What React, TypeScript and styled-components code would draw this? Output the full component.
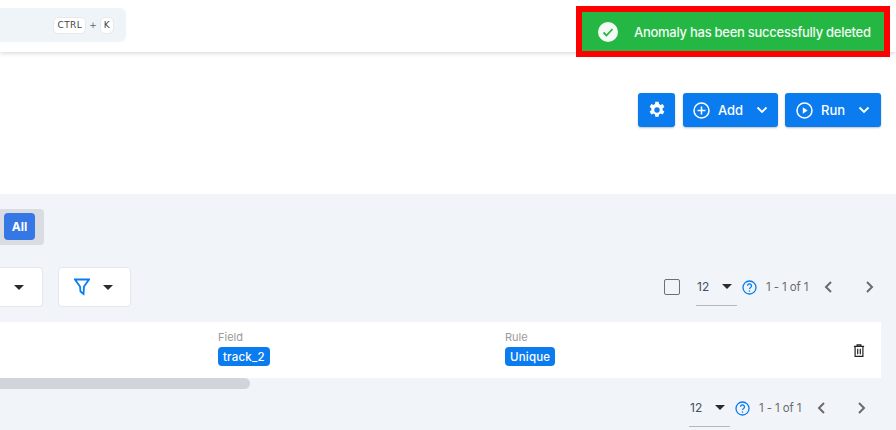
import React from "react";
import styled, { createGlobalStyle } from "styled-components";

const Global = createGlobalStyle`
  html, body { margin: 0; padding: 0; height: 430px; overflow: hidden; background: #fff; }
  body { font-family: "Inter", "Noto Sans", sans-serif; }
  * { box-sizing: border-box; }
`;

const Page = styled.div`
  position: relative;
  width: 896px;
  height: 430px;
  overflow: hidden;
  display: flex;
  flex-direction: column;
`;

const Header = styled.header`
  height: 52px;
  flex: none;
  padding-top: 8px;
  background: #fff;
  box-shadow: 0 1px 5px rgba(0, 0, 0, 0.18);
`;

const Search = styled.div`
  width: 126px;
  height: 34px;
  background: #eff4f9;
  border-radius: 0 6px 6px 0;
  display: flex;
  align-items: center;
  justify-content: flex-end;
  gap: 3px;
  padding-right: 12px;
  color: #666;
  font-family: "DejaVu Sans", sans-serif;
  font-size: 9px;
`;

const Key = styled.kbd`
  height: 17px;
  padding: 0 3px;
  display: flex;
  align-items: center;
  background: #fff;
  border: 1px solid #e6e8eb;
  border-radius: 5px;
  font-family: "DejaVu Sans", sans-serif;
  font-size: 9px;
  letter-spacing: 0.4px;
  color: #444;
`;

const Toast = styled.div`
  position: absolute;
  left: 576px;
  top: 6px;
  width: 314px;
  height: 51px;
  border: 6px solid #fe0000;
  background: #25b744;
  display: flex;
  align-items: center;
  padding: 0 13px 0 16px;
  gap: 16px;
  color: #f1fbf3;
  font-size: 13px;
  font-weight: 500;
  letter-spacing: -0.27px;
  white-space: nowrap;
`;

const Toolbar = styled.div`
  height: 142px;
  flex: none;
  padding: 41px 15px 0 0;
  display: flex;
  justify-content: flex-end;
  align-items: flex-start;
  gap: 7px;
`;

const ActionButton = styled.button<{ $w: number; $after?: number }>`
  width: ${(p) => p.$w}px;
  height: 34px;
  margin-right: ${(p) => p.$after ?? 0}px;
  padding: 0;
  border: 0;
  border-radius: 3px;
  background: #0a7cf0;
  color: #fff;
  box-shadow: 0 1px 2px rgba(0, 0, 0, 0.25);
  display: flex;
  align-items: center;
  justify-content: center;
  gap: 8px;
  font-family: inherit;
  font-size: 13px;
  font-weight: 500;
`;

const Label = styled.span`
  margin-right: 5px;
`;

const Section = styled.section`
  flex: 1;
  background: #f1f5fa;
  padding-top: 15px;
`;

const Tabs = styled.div`
  width: 44px;
  height: 36px;
  background: #d9dce1;
  border-radius: 0 4px 4px 0;
  padding: 4px 0 0 4px;
`;

const TabActive = styled.div`
  width: 31px;
  height: 27px;
  background: #3578e5;
  border-radius: 4px;
  color: #fff;
  font-size: 12px;
  font-weight: 700;
  display: flex;
  align-items: center;
  justify-content: center;
`;

const Controls = styled.div`
  margin-top: 22px;
  height: 40px;
  display: flex;
  align-items: center;
`;

const FilterBox = styled.div<{ $w: number; $open?: boolean }>`
  width: ${(p) => p.$w}px;
  height: 40px;
  background: #fff;
  border: 1px solid #e4e7eb;
  border-radius: ${(p) => (p.$open ? "0 4px 4px 0" : "4px")};
  ${(p) => (p.$open ? "border-left: 0;" : "")}
  display: flex;
  align-items: center;
  justify-content: ${(p) => (p.$open ? "flex-end" : "flex-start")};
  padding: ${(p) => (p.$open ? "0 18px 0 0" : "0 0 0 15px")};
  gap: 13px;
`;

const Gap = styled.div`
  width: 15px;
  flex: none;
`;

const Spacer = styled.div`
  flex: 1;
`;

const Caret = styled.span`
  width: 0;
  height: 0;
  flex: none;
  border-left: 5px solid transparent;
  border-right: 5px solid transparent;
  border-top: 5px solid #2b2b2b;
`;

const Pager = styled.div<{ $end: number }>`
  display: flex;
  align-items: center;
  height: 40px;
  padding-right: ${(p) => p.$end}px;
`;

const Check = styled.span`
  width: 16px;
  height: 16px;
  border: 1.5px solid #6f6f6f;
  border-radius: 2px;
  margin-right: 16px;
`;

const PageSize = styled.div`
  width: 41px;
  height: 38px;
  border-bottom: 1px solid #b5b9be;
  display: flex;
  align-items: center;
  justify-content: space-between;
  padding: 0 5px 0 1px;
  margin-right: 5px;
  font-size: 12px;
  color: #45505e;
`;

const PageText = styled.span`
  font-size: 11.5px;
  color: #6b6b6b;
  letter-spacing: -0.1px;
  margin-left: 9px;
  white-space: nowrap;
  width: 57px;
`;

const NavIcon = styled.svg<{ $gap: number }>`
  margin-right: ${(p) => p.$gap}px;
  flex: none;
`;

const Row = styled.div`
  margin-top: 15px;
  width: 881px;
  height: 56px;
  background: #fff;
  display: grid;
  grid-template-columns: 287px 1fr auto;
  align-items: start;
  padding: 9px 16px 0 218px;
`;

const Cell = styled.div`
  display: flex;
  flex-direction: column;
  align-items: flex-start;
  gap: 3px;
`;

const CellLabel = styled.span`
  font-size: 11px;
  line-height: 13px;
  color: #9a9a9a;
`;

const Badge = styled.span`
  height: 19px;
  padding: 0 5px;
  display: flex;
  align-items: center;
  background: #0a7cf0;
  border-radius: 4px;
  color: #fff;
  font-size: 11.5px;
  font-weight: 500;
  letter-spacing: 0.2px;
`;

const Trash = styled.svg`
  margin-top: 13px;
`;

const Scrollbar = styled.div`
  width: 250px;
  height: 11px;
  background: #d1d5db;
  border-radius: 0 6px 6px 0;
`;

const BottomPager = styled(Pager)`
  margin-top: -1px;
  justify-content: flex-end;
`;

const Chevron = ({ d, gap }: { d: string; gap: number }) => (
  <NavIcon $gap={gap} width="12" height="14" viewBox="0 0 12 14" fill="none" stroke="#6b6b6b" strokeWidth="2">
    <path d={d} />
  </NavIcon>
);

const Help = () => (
  <svg width="15" height="15" viewBox="0 0 15 15" fill="none" style={{ flex: "none" }}>
    <circle cx="7.5" cy="7.5" r="6.5" stroke="#0a7cf0" strokeWidth="1.3" />
    <path d="M5.5 5.8a2 2 0 1 1 3.1 1.7c-.7.4-1.1.8-1.1 1.6" stroke="#0a7cf0" strokeWidth="1.3" />
    <circle cx="7.5" cy="11" r=".8" fill="#0a7cf0" />
  </svg>
);

const Paging = () => (
  <>
    <PageSize>
      12
      <Caret />
    </PageSize>
    <Help />
    <PageText>1 - 1 of 1</PageText>
  </>
);

export default function App() {
  return (
    <Page>
      <Global />
      <Header>
        <Search>
          <Key>CTRL</Key>+<Key>K</Key>
        </Search>
      </Header>
      <Toast>
        <svg width="20" height="20" viewBox="0 0 20 20">
          <circle cx="10" cy="10" r="10" fill="#f4fbf5" />
          <path d="M5.5 10.5l3 3 6-6.5" fill="none" stroke="#25b744" strokeWidth="1.8" />
        </svg>
        Anomaly has been successfully deleted
      </Toast>
      <Toolbar>
        <ActionButton $w={37} $after={1} aria-label="Settings">
          <svg width="18" height="18" viewBox="0 0 24 24" fill="#fff">
            <path fillRule="evenodd" d="M14.2 1l.5 3a8.5 8.5 0 0 1 2.1 1.2l2.8-1.1 2.2 3.8-2.3 1.9a8.6 8.6 0 0 1 0 2.4l2.3 1.9-2.2 3.8-2.8-1.1a8.5 8.5 0 0 1-2.1 1.2l-.5 3H9.8l-.5-3a8.5 8.5 0 0 1-2.1-1.2l-2.8 1.1-2.2-3.8 2.3-1.9a8.6 8.6 0 0 1 0-2.4L2.2 7.9l2.2-3.8 2.8 1.1A8.5 8.5 0 0 1 9.3 4l.5-3zM12 8.4a3.6 3.6 0 1 0 0 7.2 3.6 3.6 0 0 0 0-7.2z" />
          </svg>
        </ActionButton>
        <ActionButton $w={95}>
          <svg width="17" height="17" viewBox="0 0 17 17" fill="none" stroke="#fff" strokeWidth="1.5">
            <circle cx="8.5" cy="8.5" r="7.5" />
            <path d="M8.5 4.5v8M4.5 8.5h8" />
          </svg>
          <Label>Add</Label>
          <svg width="12" height="8" viewBox="0 0 12 8" fill="none" stroke="#fff" strokeWidth="1.8">
            <path d="M1.5 1.5L6 6l4.5-4.5" />
          </svg>
        </ActionButton>
        <ActionButton $w={96}>
          <svg width="17" height="17" viewBox="0 0 17 17" fill="none" stroke="#fff" strokeWidth="1.5">
            <circle cx="8.5" cy="8.5" r="7.5" />
            <path d="M6.8 5.2l4.8 3.3-4.8 3.3z" fill="#fff" stroke="none" />
          </svg>
          <Label>Run</Label>
          <svg width="12" height="8" viewBox="0 0 12 8" fill="none" stroke="#fff" strokeWidth="1.8">
            <path d="M1.5 1.5L6 6l4.5-4.5" />
          </svg>
        </ActionButton>
      </Toolbar>
      <Section>
        <Tabs>
          <TabActive>All</TabActive>
        </Tabs>
        <Controls>
          <FilterBox $w={43} $open>
            <Caret />
          </FilterBox>
          <Gap />
          <FilterBox $w={73}>
            <svg width="16" height="18" viewBox="0 0 16 18" fill="none" stroke="#0a7cf0" strokeWidth="1.8">
              <path d="M1 1.5h14L10 8.5 9.5 16 6.5 13.5 6 8.5z" />
            </svg>
            <Caret />
          </FilterBox>
          <Spacer />
          <Pager $end={21}>
            <Check />
            <Paging />
            <Chevron d="M8 2L3 7l5 5" gap={28} />
            <Chevron d="M4 2l5 5-5 5" gap={0} />
          </Pager>
        </Controls>
        <Row>
          <Cell>
            <CellLabel>Field</CellLabel>
            <Badge>track_2</Badge>
          </Cell>
          <Cell>
            <CellLabel>Rule</CellLabel>
            <Badge>Unique</Badge>
          </Cell>
          <Trash width="12" height="13" viewBox="0 0 12 14" fill="none" stroke="#222" strokeWidth="1.3">
            <path d="M0.5 2.5h11M4 2.5V1h4v1.5M1.8 2.5v10.8h8.4V2.5M4.6 5v6M7.4 5v6" />
          </Trash>
        </Row>
        <Scrollbar />
        <BottomPager $end={29}>
          <Paging />
          <Chevron d="M8 2L3 7l5 5" gap={27} />
          <Chevron d="M4 2l5 5-5 5" gap={0} />
        </BottomPager>
      </Section>
    </Page>
  );
}
